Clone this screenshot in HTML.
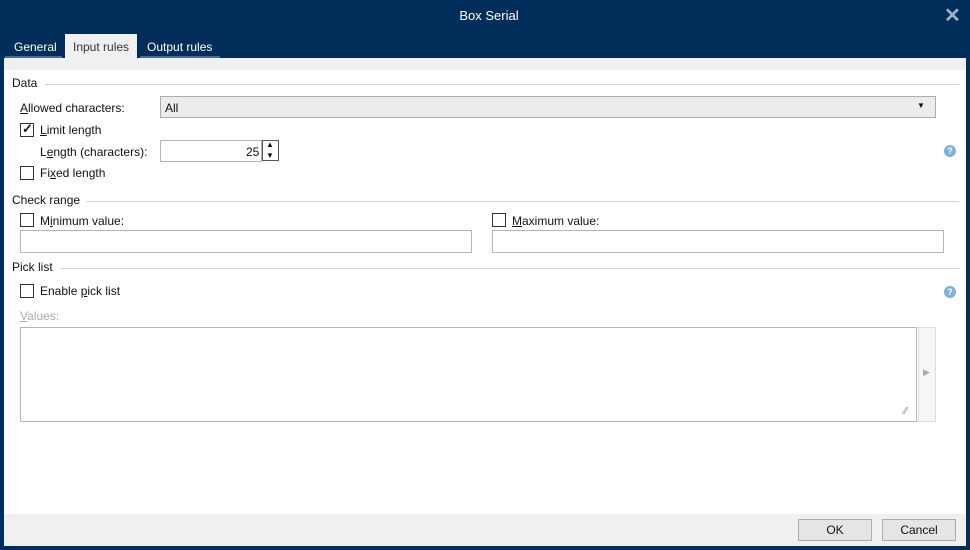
<!DOCTYPE html>
<html><head><style>
*{margin:0;padding:0;box-sizing:border-box}
body{width:970px;height:550px;background:#002d5a;font-family:"Liberation Sans",sans-serif;font-size:12px;color:#111;position:relative;overflow:hidden}
.a{position:absolute;white-space:nowrap}
.t{color:#fff}
.cb{position:absolute;width:14px;height:14px;border:1px solid #333;background:#fff}
.in{position:absolute;border:1px solid #b5b5b5;background:#fff}
.hr{position:absolute;height:1px;background:#d5d5d5}
.help{position:absolute;width:12px;height:12px;border-radius:50%;background:#7fb2d8;color:#fff;font-size:9px;font-weight:bold;text-align:center;line-height:12px}
.btn{position:absolute;border:1px solid #adadad;background:#e5e5e5;text-align:center;line-height:20px;height:22px}
</style></head><body>
<div class="a t" style="left:0;width:978px;text-align:center;top:8px;font-size:13px">Box Serial</div>
<div class="a t" style="left:944px;top:3px;font-size:20px;font-weight:bold;color:#9fb0c4">✕</div>
<div class="a t" style="left:14px;top:40px">General</div>
<div class="a" style="left:5px;top:56px;width:57px;height:2px;background:#4b6b8d"></div>
<div class="a" style="left:65px;top:34px;width:72px;height:24px;background:#f0f0f0"></div>
<div class="a" style="left:73px;top:40px;color:#333">Input rules</div>
<div class="a t" style="left:147px;top:40px">Output rules</div>
<div class="a" style="left:140px;top:56px;width:80px;height:2px;background:#4b6b8d"></div>
<div class="a" style="left:4px;top:58px;width:962px;height:12px;background:#f0f0f0"></div>
<div class="a" style="left:4px;top:70px;width:962px;height:444px;background:#fff"></div>
<div class="a" style="left:4px;top:514px;width:962px;height:32px;background:#f0f0f0"></div>

<div class="a" style="left:12px;top:76px">Data</div>
<div class="hr" style="left:45px;top:84px;width:914px"></div>
<div class="a" style="left:20px;top:101px"><u>A</u>llowed characters:</div>
<div class="in" style="left:160px;top:96px;width:776px;height:22px;background:#ececec;border-color:#adadad"></div>
<div class="a" style="left:165px;top:101px">All</div>
<div class="a" style="left:917px;top:101px;font-size:8px">▼</div>
<div class="cb" style="left:20px;top:123px"></div>
<div class="a" style="left:22px;top:121px;font-size:13px;font-weight:bold">✓</div>
<div class="a" style="left:40px;top:123px"><u>L</u>imit length</div>
<div class="a" style="left:40px;top:145px">L<u>e</u>ngth (characters):</div>
<div class="in" style="left:160px;top:140px;width:102px;height:22px"></div>
<div class="a" style="left:246px;top:145px">25</div>
<div class="in" style="left:262px;top:140px;width:17px;height:21px;border-color:#555"></div>
<div class="a" style="left:266px;top:140px;font-size:8px">▲</div>
<div class="a" style="left:266px;top:151px;font-size:8px">▼</div>
<div class="help" style="left:944px;top:145px">?</div>
<div class="cb" style="left:20px;top:166px"></div>
<div class="a" style="left:40px;top:166px">Fi<u>x</u>ed length</div>

<div class="a" style="left:12px;top:193px">Check range</div>
<div class="hr" style="left:86px;top:201px;width:873px"></div>
<div class="cb" style="left:20px;top:213px"></div>
<div class="a" style="left:40px;top:214px">M<u>i</u>nimum value:</div>
<div class="in" style="left:20px;top:230px;width:452px;height:23px"></div>
<div class="cb" style="left:492px;top:213px"></div>
<div class="a" style="left:512px;top:214px"><u>M</u>aximum value:</div>
<div class="in" style="left:492px;top:230px;width:452px;height:23px"></div>

<div class="a" style="left:12px;top:260px">Pick list</div>
<div class="hr" style="left:59px;top:268px;width:900px"></div>
<div class="cb" style="left:20px;top:284px"></div>
<div class="a" style="left:40px;top:284px">Enable <u>p</u>ick list</div>
<div class="help" style="left:944px;top:286px">?</div>
<div class="a" style="left:20px;top:309px;color:#aaa"><u>V</u>alues:</div>
<div class="in" style="left:20px;top:327px;width:897px;height:95px"></div>
<div class="a" style="left:904px;top:406px;color:#888;font-size:10px">⁄⁄</div>
<div class="in" style="left:918px;top:327px;width:18px;height:95px;background:#f7f7f7;border-color:#ddd"></div>
<div class="a" style="left:923px;top:367px;color:#aaa;font-size:9px">▶</div>

<div class="btn" style="left:798px;top:519px;width:74px">OK</div>
<div class="btn" style="left:882px;top:519px;width:74px">Cancel</div>
</body></html>
